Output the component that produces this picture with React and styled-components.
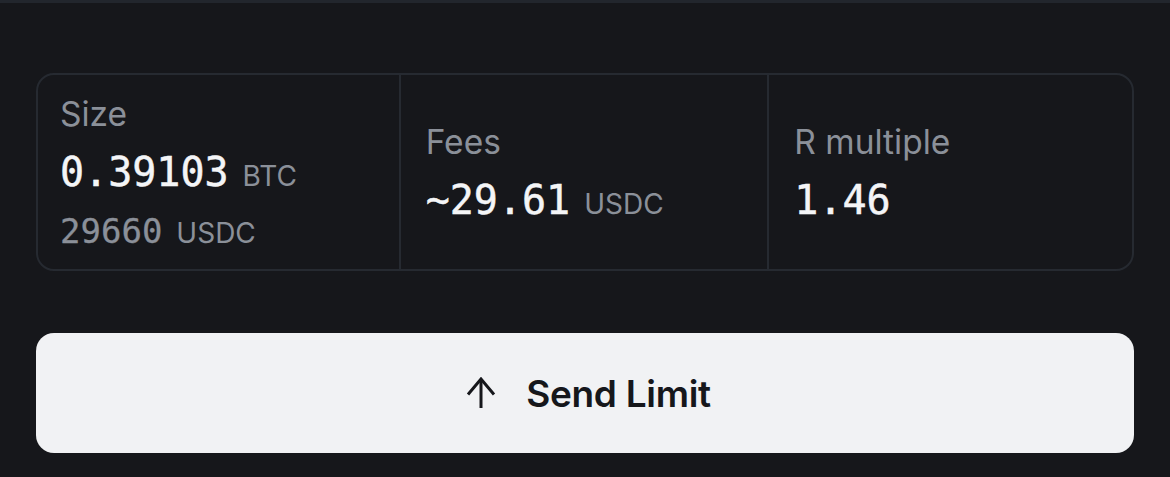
import React from 'react'
import styled, {createGlobalStyle} from 'styled-components'

const GlobalStyle = createGlobalStyle`
  html, body {
    margin: 0;
    padding: 0;
    background: #16171b;
  }
  body {
    font-family: 'Inter', 'Liberation Sans', sans-serif;
    -webkit-font-smoothing: antialiased;
  }
`

const Panel = styled.div`
  border-top: 3px solid #22262d;
  padding: 70px 36px 24px;
  min-height: 477px;
  box-sizing: border-box;
`

const Summary = styled.div`
  display: grid;
  grid-template-columns: 362fr 368fr 362fr;
  border: 2px solid #262a31;
  border-radius: 18px;
`

const Cell = styled.div`
  display: flex;
  flex-direction: column;
  justify-content: center;
  padding: 19px 23px 18px 22px;
  border-right: ${p => (p.$last ? 'none' : '2px solid #262a31')};

  & + & {
    padding-left: 25px;
  }
`

const Label = styled.div`
  font-size: 33.5px;
  line-height: 40px;
  color: #8b9099;
`

const Value = styled.div`
  display: flex;
  align-items: baseline;
  margin-top: 14px;
  white-space: nowrap;
`

const Num = styled.span`
  font-family: 'DejaVu Sans Mono', 'Liberation Mono', monospace;
  font-size: 40px;
  line-height: 48px;
  color: #f4f5f7;
  -webkit-text-stroke: 0.5px #f4f5f7;
`

const Sub = styled.div`
  display: flex;
  align-items: baseline;
  margin-top: 15px;
  white-space: nowrap;
`

const SubNum = styled.span`
  font-family: 'DejaVu Sans Mono', 'Liberation Mono', monospace;
  font-size: 34px;
  line-height: 40px;
  color: #8b9099;
  -webkit-text-stroke: 0.3px #8b9099;
`

const Unit = styled.span`
  font-size: 28px;
  line-height: 28px;
  color: #8b9099;
  margin-left: 14px;
`

const SendButton = styled.button`
  margin-top: 62px;
  width: 100%;
  height: 120px;
  border: none;
  border-radius: 18px;
  background: #f1f2f4;
  color: #16171b;
  display: flex;
  align-items: center;
  justify-content: center;
  gap: 29px;
  padding: 0 0 0 6px;
  font-family: 'Inter', 'Liberation Sans', sans-serif;
  font-size: 37px;
  font-weight: 600;
  letter-spacing: -0.3px;
  cursor: pointer;
`

const ArrowUp = () => (
  <svg width="32" height="32" viewBox="0 0 32 32" fill="none" stroke="#16171b" strokeWidth="3">
    <path d="M3 17.5 L16 2 L29 17.5" />
    <path d="M16 2 V31" />
  </svg>
)

export default function App() {
  return (
    <>
      <GlobalStyle />
      <Panel>
        <Summary>
          <Cell>
            <Label>Size</Label>
            <Value>
              <Num>0.39103</Num>
              <Unit>BTC</Unit>
            </Value>
            <Sub>
              <SubNum>29660</SubNum>
              <Unit>USDC</Unit>
            </Sub>
          </Cell>
          <Cell>
            <Label>Fees</Label>
            <Value>
              <Num>~29.61</Num>
              <Unit>USDC</Unit>
            </Value>
          </Cell>
          <Cell $last>
            <Label>R multiple</Label>
            <Value>
              <Num>1.46</Num>
            </Value>
          </Cell>
        </Summary>
        <SendButton>
          <ArrowUp />
          Send Limit
        </SendButton>
      </Panel>
    </>
  )
}
